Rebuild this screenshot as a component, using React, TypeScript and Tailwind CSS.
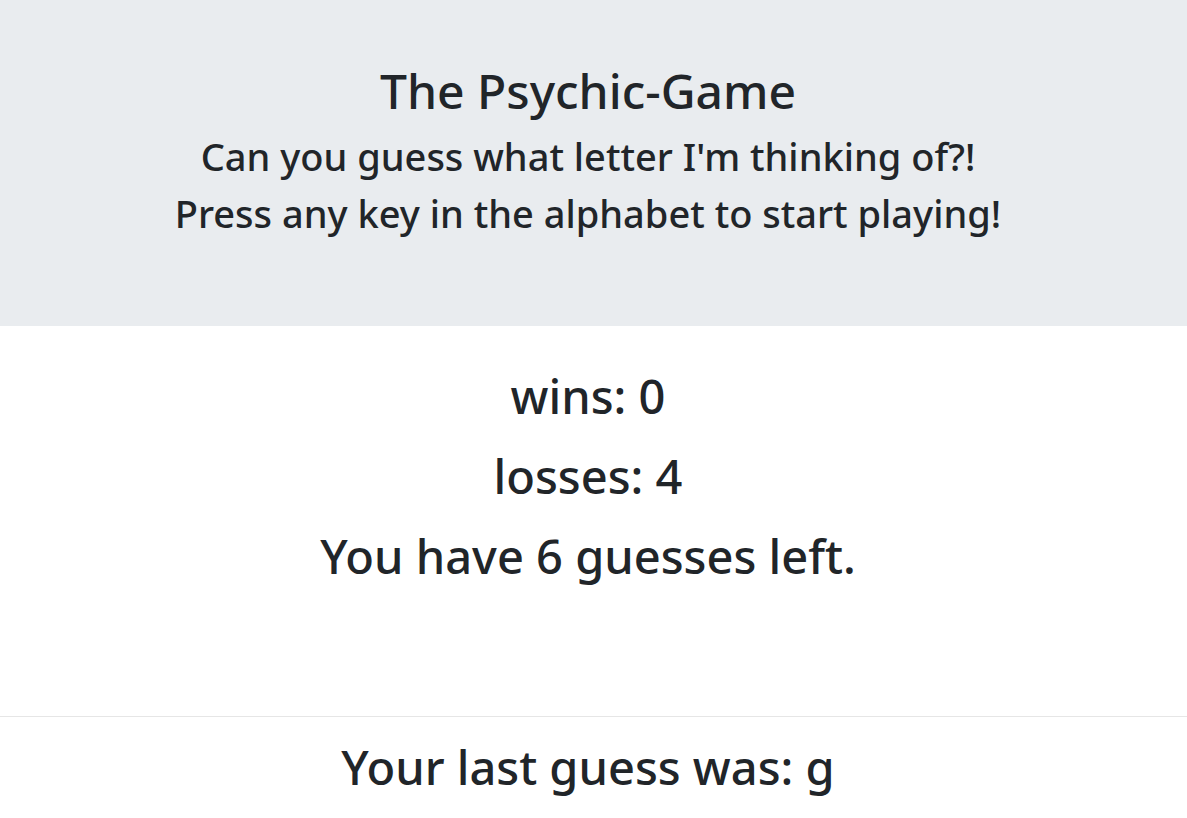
import React from 'react'

export default function App() {
  return (
    <main className="min-h-screen bg-white text-[#212529] font-['Noto_Sans',sans-serif] text-center">
      <div className="bg-[#e9ecef] h-[326px] pt-[61px] pr-[11px]">
        <h1 className="text-[48px] leading-[60px] font-medium">The Psychic-Game</h1>
        <div className="mt-[7px] text-[38px] leading-[57px] font-medium">
          <p>Can you guess what letter I'm thinking of?!</p>
          <p>Press any key in the alphabet to start playing!</p>
        </div>
      </div>

      <div className="mt-[30px] pr-[11px] text-[47px] leading-[80px] font-medium">
        <p>wins: 0</p>
        <p>losses: 4</p>
        <p>You have 6 guesses left.</p>
      </div>

      <hr className="mt-[120px] border-t border-[#e6e6e6]" />

      <p className="mt-[10px] pr-[11px] text-[47px] leading-[80px] font-medium">Your last guess was: g</p>
    </main>
  )
}
